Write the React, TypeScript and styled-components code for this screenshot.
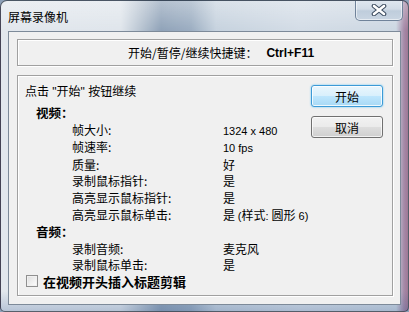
import { Fragment } from "react";
import styled, { createGlobalStyle } from "styled-components";

const GlobalStyle = createGlobalStyle`
  html, body {
    margin: 0;
    padding: 0;
    background: #8da0b8;
  }
  * {
    box-sizing: border-box;
  }
`;

interface SettingRow {
  label: string;
  value: React.ReactNode;
}

// 창 전체 (유리 프레임)
const Window = styled.div`
  width: 409px;
  height: 312px;
  display: flex;
  flex-direction: column;
  padding: 0 7px 6px 7px;
  border: 1px solid rgba(38, 48, 62, 0.75);
  border-radius: 7px 7px 5px 5px;
  overflow: hidden;
  font-family: "Liberation Sans", "Noto Sans CJK SC", sans-serif;
  font-size: 12px;
  color: #000;
  background:
    linear-gradient(
      to bottom,
      rgba(255, 255, 255, 0.35) 0px,
      rgba(255, 255, 255, 0) 30px,
      rgba(255, 255, 255, 0) 290px,
      rgba(40, 80, 140, 0.25) 312px
    ),
    linear-gradient(
      to right,
      #e2e7ed 0px,
      #dfe5eb 120px,
      #b3c0ce 142px,
      #8fa2b8 160px,
      #9badc1 190px,
      #c6d2de 215px,
      #d3dce6 300px,
      #ccd7e2 395px,
      #a58aa8 403px,
      #9c6f8c 409px
    );
`;

const TitleBar = styled.div`
  height: 30px;
  display: flex;
  align-items: flex-start;
  flex-shrink: 0;
`;

const Title = styled.div`
  padding-top: 8px;
  line-height: 16px;
  font-size: 12px;
  font-family: "Noto Sans CJK SC", sans-serif;
`;

const CloseButton = styled.div`
  margin-left: auto;
  margin-right: -2px;
  margin-top: -1px;
  width: 48px;
  height: 21px;
  display: flex;
  align-items: center;
  justify-content: center;
  border: 1px solid #70839a;
  border-top: none;
  border-radius: 0 0 5px 5px;
  background: linear-gradient(to bottom, #e0e8f0 0%, #d2dce7 45%, #bfcddc 55%, #c9d5e2 100%);
  box-shadow: inset 0 0 0 1px rgba(255, 255, 255, 0.55);
`;

// 클라이언트 영역
const Client = styled.div`
  flex: 1;
  display: flex;
  flex-direction: column;
  gap: 9px;
  padding: 7px 7px 8px 8px;
  background: #f0f0f0;
  border: 1px solid #7d8a99;
`;

const Frame = styled.div`
  border: 1px solid #a0a0a0;
  box-shadow: inset 1px 1px 0 #fff, 1px 1px 0 #fff;
`;

const ShortcutBox = styled(Frame)`
  height: 27px;
  display: flex;
  align-items: center;
  padding-left: 110px;
  font-family: "Noto Sans CJK SC", sans-serif;
  font-size: 12px;
`;

const Hotkey = styled.span`
  margin-left: 9px;
  font-family: "Liberation Sans", sans-serif;
  font-weight: 700;
  font-size: 12px;
`;

const MainBox = styled(Frame)`
  flex: 1;
  display: flex;
  padding: 8px 9px 0 7px;
`;

const Content = styled.div`
  flex: 1;
  display: flex;
  flex-direction: column;
`;

const Hint = styled.div`
  line-height: 17px;
  margin-bottom: 4px;
  font-family: "Liberation Sans", "Noto Sans CJK SC", sans-serif;
`;

const SectionTitle = styled.div`
  padding-left: 11px;
  line-height: 16.6px;
  font-weight: 700;
  font-size: 12.5px;
  font-family: "Noto Sans CJK SC", sans-serif;
`;

const Rows = styled.div`
  display: grid;
  grid-template-columns: 151px 1fr;
  padding-left: 47px;
  line-height: 16.6px;
`;

const Label = styled.div`
  font-family: "Noto Sans CJK SC", sans-serif;
  white-space: nowrap;
`;

const Value = styled.div`
  font-family: "Noto Sans CJK SC", sans-serif;
  white-space: nowrap;
`;

const Latin = styled.span`
  font-family: "Liberation Sans", sans-serif;
  font-size: 11px;
`;

const CheckRow = styled.label`
  display: flex;
  align-items: center;
  gap: 5px;
  height: 17px;
  margin-top: -1px;
  padding-left: 1px;
  line-height: 17px;
`;

const CheckBox = styled.span`
  width: 12px;
  height: 12px;
  border: 1px solid #8f8f8f;
  background: linear-gradient(135deg, #dcdcdc 0%, #f4f4f4 70%, #ffffff 100%);
  box-shadow: inset 0 0 0 1px #f0f0f0;
`;

const CheckLabel = styled.span`
  font-family: "Noto Sans CJK SC", sans-serif;
  font-weight: 700;
  font-size: 13px;
  line-height: 17px;
`;

const ButtonColumn = styled.div`
  width: 72px;
  display: flex;
  flex-direction: column;
  gap: 9px;
  padding-top: 1px;
`;

const Button = styled.button<{ $primary?: boolean }>`
  width: 72px;
  height: 22px;
  padding: 0;
  border-radius: 3px;
  font-family: "Noto Sans CJK SC", sans-serif;
  font-size: 12px;
  color: #000;
  border: 1px solid ${(p) => (p.$primary ? "#3c9ad6" : "#707070")};
  background: ${(p) =>
    p.$primary
      ? "linear-gradient(to bottom, #eaf6fd 0%, #d9f0fc 48%, #bee6fd 52%, #a7d9f5 100%)"
      : "linear-gradient(to bottom, #f2f2f2 0%, #ebebeb 48%, #dddddd 52%, #cfcfcf 100%)"};
  box-shadow: ${(p) =>
    p.$primary
      ? "inset 0 0 0 1px rgba(255,255,255,0.8), 0 0 2px #58c2f5"
      : "inset 0 0 0 1px rgba(255,255,255,0.7)"};
`;

const videoRows: SettingRow[] = [
  { label: "帧大小:", value: <Latin>1324 x 480</Latin> },
  { label: "帧速率:", value: <Latin>10 fps</Latin> },
  { label: "质量:", value: "好" },
  { label: "录制鼠标指针:", value: "是" },
  { label: "高亮显示鼠标指针:", value: "是" },
  {
    label: "高亮显示鼠标单击:",
    value: (
      <>
        是 <Latin>(</Latin>样式<Latin>: </Latin>圆形<Latin> 6)</Latin>
      </>
    ),
  },
];

const audioRows: SettingRow[] = [
  { label: "录制音频:", value: "麦克风" },
  { label: "录制鼠标单击:", value: "是" },
];

const SettingRows = ({ rows }: { rows: SettingRow[] }) => (
  <Rows>
    {rows.map((r) => (
      <Fragment key={r.label}>
        <Label>{r.label}</Label>
        <Value>{r.value}</Value>
      </Fragment>
    ))}
  </Rows>
);

export default function App() {
  return (
    <>
      <GlobalStyle />
      <Window>
        <TitleBar>
          <Title>屏幕录像机</Title>
          <CloseButton>
            <svg width="16" height="12" viewBox="0 0 16 12">
              <path d="M3 2 L13 10 M13 2 L3 10" stroke="#3a4a5e" strokeWidth="4.6" strokeLinecap="round" />
              <path d="M3 2 L13 10 M13 2 L3 10" stroke="#ffffff" strokeWidth="2.6" strokeLinecap="round" />
            </svg>
          </CloseButton>
        </TitleBar>
        <Client>
          <ShortcutBox>
            开始/暂停/继续快捷键：<Hotkey>Ctrl+F11</Hotkey>
          </ShortcutBox>
          <MainBox>
            <Content>
              <Hint>点击 "开始" 按钮继续</Hint>
              <SectionTitle>视频：</SectionTitle>
              <SettingRows rows={videoRows} />
              <SectionTitle>音频：</SectionTitle>
              <SettingRows rows={audioRows} />
              <CheckRow>
                <CheckBox />
                <CheckLabel>在视频开头插入标题剪辑</CheckLabel>
              </CheckRow>
            </Content>
            <ButtonColumn>
              <Button $primary>开始</Button>
              <Button>取消</Button>
            </ButtonColumn>
          </MainBox>
        </Client>
      </Window>
    </>
  );
}
